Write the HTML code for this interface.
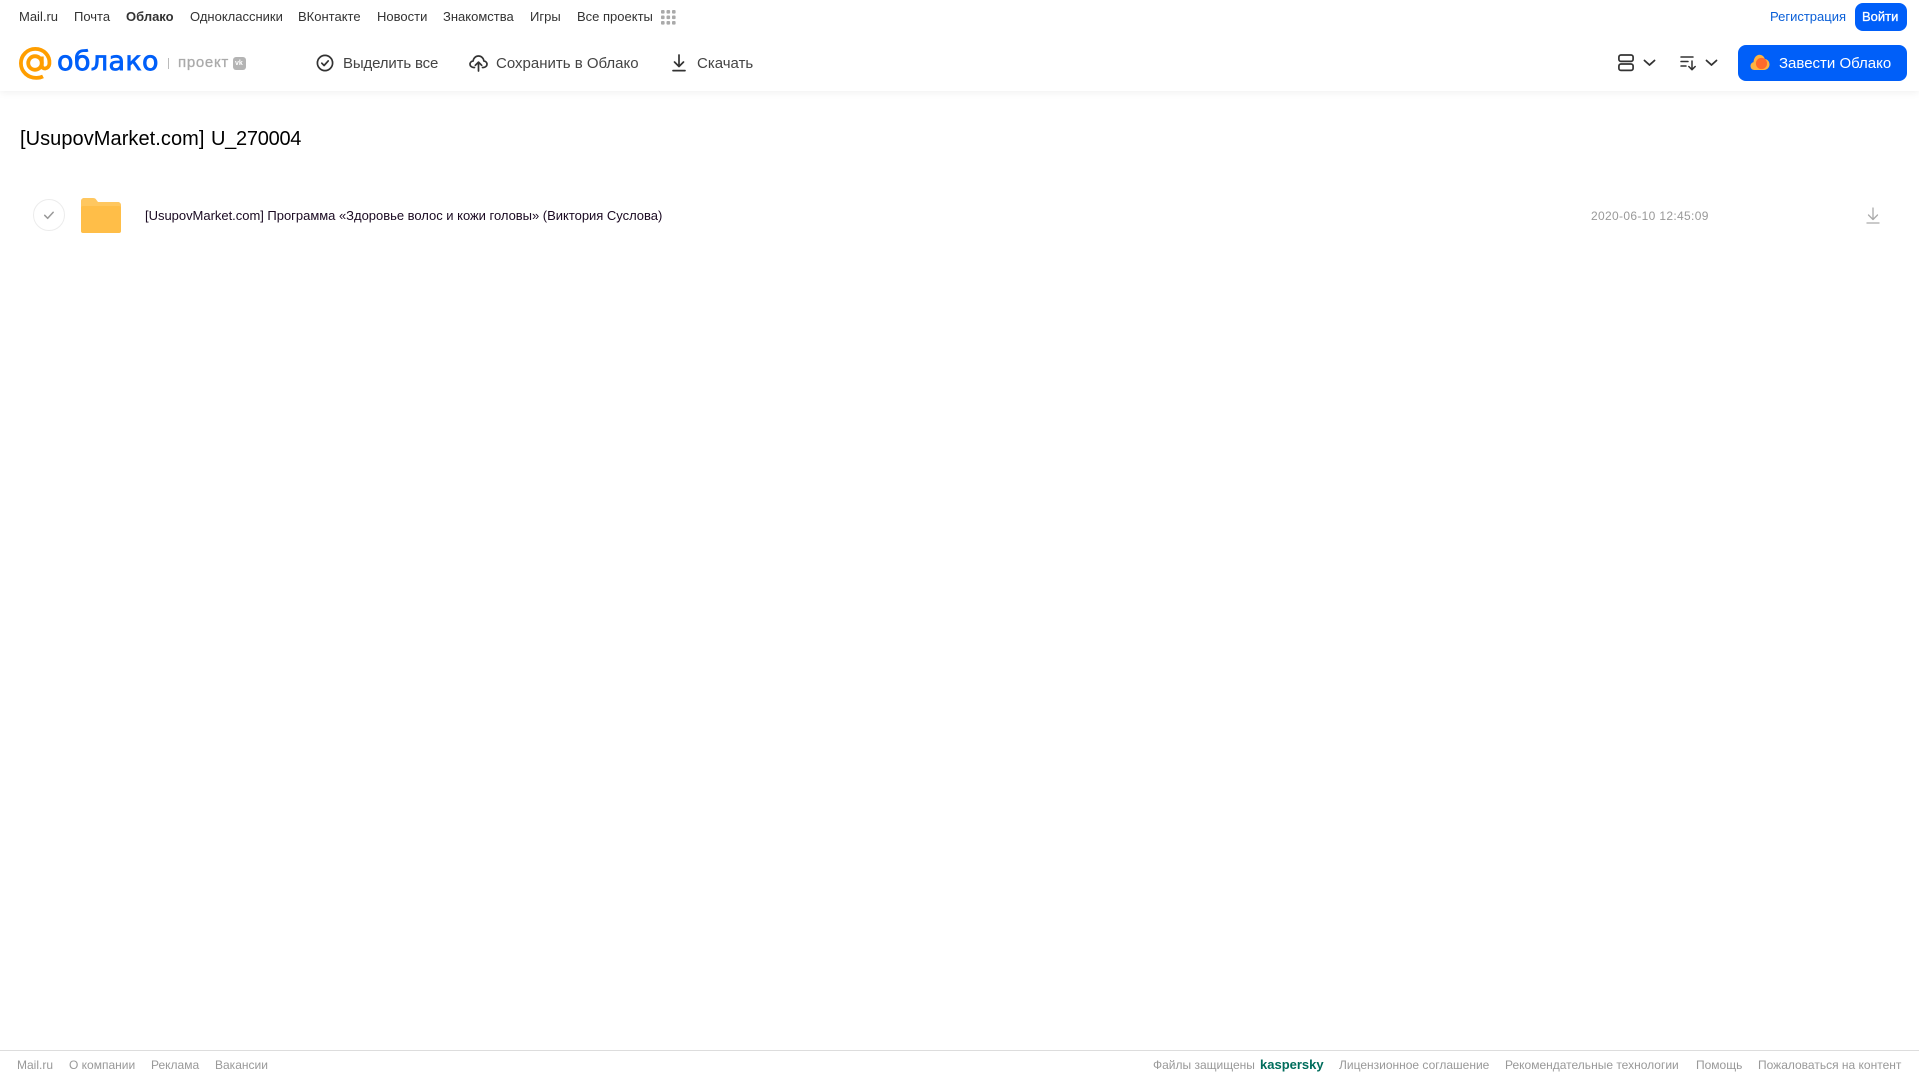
<!DOCTYPE html>
<html lang="ru"><head><meta charset="utf-8"><title>Облако</title>
<style>
html,body{margin:0;padding:0;width:1919px;height:1079px;overflow:hidden;background:#fff;font-family:"Liberation Sans",sans-serif}
.t{position:absolute;white-space:nowrap;line-height:16px}
.n{top:9px;font-size:13px;color:#333}
.b{top:56px;font-size:15px;color:#444}
.f{top:1057px;font-size:12px;color:#999}
svg{position:absolute;overflow:visible}
.box{position:absolute}
</style></head><body>
<div class="box" style="left:0;top:0;width:1919px;height:91px;background:#fff;box-shadow:0 1px 8px rgba(0,0,0,.07)"></div>

<span class="t n" style="left:19px">Mail.ru</span>
<span class="t n" style="left:74px">Почта</span>
<span class="t n" style="left:126px;font-weight:bold">Облако</span>
<span class="t n" style="left:190px">Одноклассники</span>
<span class="t n" style="left:298px">ВКонтакте</span>
<span class="t n" style="left:377px">Новости</span>
<span class="t n" style="left:443px">Знакомства</span>
<span class="t n" style="left:530px">Игры</span>
<span class="t n" style="left:577px">Все проекты</span>
<svg style="left:661px;top:10px" width="15" height="15" fill="#aaa"><rect x="0" y="0" width="3.6" height="3.6" rx="1"/><rect x="5.5" y="0" width="3.6" height="3.6" rx="1"/><rect x="11" y="0" width="3.6" height="3.6" rx="1"/><rect x="0" y="5.5" width="3.6" height="3.6" rx="1"/><rect x="5.5" y="5.5" width="3.6" height="3.6" rx="1"/><rect x="11" y="5.5" width="3.6" height="3.6" rx="1"/><rect x="0" y="11" width="3.6" height="3.6" rx="1"/><rect x="5.5" y="11" width="3.6" height="3.6" rx="1"/><rect x="11" y="11" width="3.6" height="3.6" rx="1"/></svg>

<svg style="left:19px;top:47px" width="33" height="33" viewBox="0 0 33 33" fill="none" stroke="#ff9e00" stroke-width="3.8"><circle cx="16" cy="16" r="6.800"/><path d="M22.800 9.500v9c0 4.200 6.900 4.200 7.600-1.600C31.200 8.500 24.600 1.900 16.300 1.900 8.300 1.900 1.900 8.300 1.900 16.300c0 8.700 7.400 14.800 15.700 14.600 2.500-.1 4.600-.6 6.400-1.500"/></svg>
<span class="t" style="left:57px;top:46px;font-family:'DejaVu Sans',sans-serif;font-size:27px;line-height:32px;color:#005ff9;-webkit-text-stroke:.8px #005ff9;letter-spacing:.35px">облако</span>
<div class="box" style="left:168px;top:58px;width:1px;height:11px;background:#bbb"></div>
<span class="t" style="left:178px;top:55px;font-size:15px;color:#aaa;-webkit-text-stroke:.3px #aaa;letter-spacing:.7px">проект</span>
<div class="box" style="left:233px;top:57px;width:13px;height:13px;border-radius:3px;background:#b4b4b4"></div>
<span class="t" style="left:235px;top:56px;font-size:7px;font-weight:bold;color:#fff">vk</span>

<svg style="left:316px;top:54px" width="18" height="18" viewBox="0 0 18 18" fill="none" stroke="#333" stroke-width="1.7"><circle cx="9" cy="9" r="7.6"/><path d="M5.800 9.200l2.300 2.300 4.100-4.600" stroke-linecap="round" stroke-linejoin="round"/></svg>
<span class="t b" style="left:343px;letter-spacing:-.15px">Выделить все</span>
<svg style="left:469px;top:54px" width="19" height="18" viewBox="0 0 19 18" fill="none" stroke="#333" stroke-width="1.700" stroke-linecap="round" stroke-linejoin="round"><path d="M5.500 13.500H4.800C2.700 13.500 1 12 1 10.200c0-1.700 1.300-3 3.100-3.200C4.500 4 6.800 2 9.500 2s5 2 5.400 5c1.800.2 3.100 1.500 3.100 3.200 0 1.800-1.700 3.300-3.800 3.300h-.7"/><path d="M9.500 17V8.500M6.300 11.300l3.200-3.200 3.200 3.200"/></svg>
<span class="t b" style="left:496px">Сохранить в Облако</span>
<svg style="left:672px;top:54px" width="14" height="18" viewBox="0 0 14 18" fill="none" stroke="#333" stroke-width="1.700" stroke-linecap="round" stroke-linejoin="round"><path d="M7 1v11M2.500 8l4.500 4.500L11.500 8M1 16.600h12"/></svg>
<span class="t b" style="left:697px">Скачать</span>

<span class="t n" style="left:1770px;color:#0a5fd8">Регистрация</span>
<div class="box" style="left:1855px;top:3px;width:52px;height:28px;border-radius:8px;background:#005ff9"></div>
<span class="t n" style="left:1862px;color:#fff;-webkit-text-stroke:.3px #fff">Войти</span>

<svg style="left:1618px;top:54px" width="16" height="18" viewBox="0 0 16 18" fill="none" stroke="#333" stroke-width="1.700"><rect x=".9" y="1" width="14.200" height="6.400" rx="2"/><rect x=".9" y="10" width="14.200" height="6.400" rx="2"/></svg>
<svg style="left:1643px;top:59px" width="13" height="8" viewBox="0 0 13 8" fill="none" stroke="#333" stroke-width="1.800" stroke-linecap="round" stroke-linejoin="round"><path d="M1.500 1.500l5 4.500 5-4.500"/></svg>
<svg style="left:1680px;top:55px" width="17" height="16" viewBox="0 0 17 16" fill="none" stroke="#333" stroke-width="1.500" stroke-linecap="round" stroke-linejoin="round"><path d="M1 2h12M1 6.500h7M1 11h5M12 6v8.500M8.800 11.500l3.200 3.200 3.200-3.200"/></svg>
<svg style="left:1705px;top:59px" width="13" height="8" viewBox="0 0 13 8" fill="none" stroke="#333" stroke-width="1.800" stroke-linecap="round" stroke-linejoin="round"><path d="M1.500 1.500l5 4.500 5-4.500"/></svg>

<div class="box" style="left:1738px;top:45px;width:169px;height:36px;border-radius:8px;background:#005ff9"></div>
<svg style="left:1750px;top:54px" width="20" height="17" viewBox="0 0 20 17"><path d="M4.500 16C2 16 .5 14.200.5 12c0-2 1.300-3.500 3-3.900C3.800 4 6.200.7 9.500.7c2.700 0 4.700 1.800 5.300 4.300 2.700.3 4.700 2.500 4.700 5.400 0 3.200-2.400 5.600-5.500 5.600z" fill="#ffb340"/><circle cx="11.500" cy="9.500" r="5.600" fill="#ff6a2b"/></svg>
<span class="t" style="left:1779px;top:56px;font-size:15px;color:#fff">Завести Облако</span>

<span class="t" style="left:20px;top:127px;font-size:20px;line-height:24px;color:#000;letter-spacing:.06px">[UsupovMarket.com]</span>
<span class="t" style="left:211px;top:127px;font-size:20px;line-height:24px;color:#000;letter-spacing:-.27px">U_270004</span>

<svg style="left:33px;top:199px" width="32" height="32" viewBox="0 0 32 32" fill="none"><circle cx="16" cy="16" r="15.500" stroke="#ececec"/><path d="M11.700 16.300l3 3 5.500-6" stroke="#999" stroke-width="1.500" stroke-linecap="round" stroke-linejoin="round"/></svg>
<svg style="left:81px;top:198px" width="40" height="35" viewBox="0 0 40 35"><path d="M0 3C0 1.300 1.300 0 3 0h9c1.500 0 2.500.5 3.300 1.700L17 4h20c1.700 0 3 1.300 3 3v25c0 1.700-1.300 3-3 3H3c-1.700 0-3-1.300-3-3z" fill="#ffc75f"/><rect x="0" y="8" width="40" height="27" rx="2" fill="#ffbe48"/></svg>
<span class="t" style="left:145px;top:208px;font-size:13px;letter-spacing:-.02px;color:#1a0a22">[UsupovMarket.com] Программа «Здоровье волос и кожи головы» (Виктория Суслова)</span>
<span class="t" style="left:1591px;top:208px;font-size:12px;color:#999;letter-spacing:.33px">2020-06-10 12:45:09</span>
<svg style="left:1866px;top:207px" width="14" height="18" viewBox="0 0 14 18" fill="none" stroke="#aaa" stroke-width="1.300" stroke-linecap="round" stroke-linejoin="round"><path d="M7 1v11M2.500 8l4.500 4.500L11.500 8M1 16h12"/></svg>

<div class="box" style="left:0;top:1050px;width:1919px;height:1px;background:#ddd"></div>
<span class="t f" style="left:17px">Mail.ru</span>
<span class="t f" style="left:69px">О компании</span>
<span class="t f" style="left:151px">Реклама</span>
<span class="t f" style="left:215px">Вакансии</span>
<span class="t f" style="left:1153px">Файлы защищены</span>
<span class="t f" style="left:1260px;font-size:13px;font-weight:bold;color:#006d5c">kaspersky</span>
<span class="t f" style="left:1339px">Лицензионное соглашение</span>
<span class="t f" style="left:1505px">Рекомендательные технологии</span>
<span class="t f" style="left:1696px">Помощь</span>
<span class="t f" style="left:1758px">Пожаловаться на контент</span>
</body></html>
